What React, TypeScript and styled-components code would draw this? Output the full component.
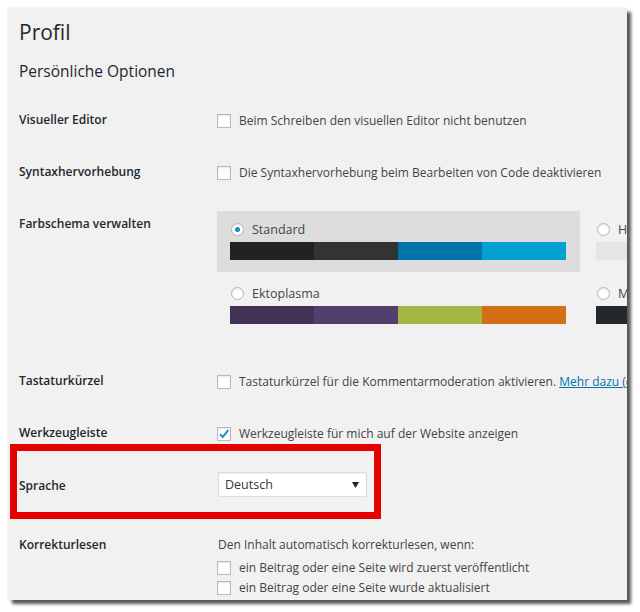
import * as React from 'react';
import styled, { createGlobalStyle } from 'styled-components';

const GlobalStyle = createGlobalStyle`
  html, body {
    margin: 0;
    padding: 0;
    background: #ffffff;
  }
  body {
    font-family: 'Open Sans', 'Noto Sans', sans-serif;
  }
`;

const Page = styled.div`
  width: 640px;
  height: 612px;
  padding: 8px 0 0 8px;
  box-sizing: border-box;
`;

const Panel = styled.div`
  width: 619px;
  height: 592px;
  box-sizing: border-box;
  padding-left: 11px;
  background: #f1f1f1;
  box-shadow: 4px 4px 3px rgba(0, 0, 0, 0.65), 0 0 2px rgba(0, 0, 0, 0.12);
  overflow: hidden;
  color: #444;
  font-size: 12px;
`;

const Title = styled.h1`
  margin: 10px 0 0;
  font-size: 21px;
  line-height: 28px;
  font-weight: 400;
  color: #23282d;
`;

const Subtitle = styled.h2`
  margin: 15px 0 13px;
  font-size: 15.5px;
  line-height: 20px;
  font-weight: 400;
  color: #23282d;
`;

const Row = styled.div<{ $height?: number }>`
  position: relative;
  display: grid;
  grid-template-columns: 198px 1fr;
  min-height: ${(p) => p.$height ?? 52}px;
  box-sizing: border-box;
`;

const Label = styled.div<{ $top?: number }>`
  padding-top: ${(p) => p.$top ?? 17}px;
  font-size: 12px;
  line-height: 18px;
  font-weight: 600;
  color: #23282d;
  white-space: nowrap;
`;

const Field = styled.div<{ $top?: number }>`
  padding-top: ${(p) => p.$top ?? 17}px;
  min-width: 0;
`;

const Choice = styled.label<{ $gap?: number }>`
  display: flex;
  align-items: center;
  gap: 8px;
  height: 20px;
  line-height: 20px;
  white-space: nowrap;
  margin-top: ${(p) => p.$gap ?? 0}px;
`;

const Box = styled.span`
  flex: none;
  width: 14px;
  height: 14px;
  box-sizing: border-box;
  border: 1px solid #b4b9be;
  background: #fff;
  box-shadow: inset 0 1px 2px rgba(0, 0, 0, 0.1);
  display: flex;
  align-items: center;
  justify-content: center;
`;

const Link = styled.a`
  color: #0073aa;
  text-decoration: underline;
`;

const Plain = styled.div`
  line-height: 18px;
  margin-left: 1px;
  white-space: nowrap;
`;

const Schemes = styled.div`
  display: grid;
  grid-template-columns: 363px 363px;
  column-gap: 3px;
  row-gap: 3px;
  padding: 13px 0 19px;
`;

const Scheme = styled.div<{ $active?: boolean }>`
  padding: 10px 13px 12px;
  background: ${(p) => (p.$active ? '#dddddd' : 'transparent')};
`;

const SchemeHead = styled.div`
  display: flex;
  align-items: center;
  gap: 8px;
  height: 16px;
  padding-left: 1px;
  font-size: 12.5px;
  color: #444;
  white-space: nowrap;
`;

const Radio = styled.span<{ $on?: boolean }>`
  flex: none;
  width: 13px;
  height: 13px;
  box-sizing: border-box;
  border-radius: 50%;
  border: 1px solid #b4b9be;
  background: #fff;
  box-shadow: inset 0 1px 2px rgba(0, 0, 0, 0.1);
  display: flex;
  align-items: center;
  justify-content: center;
  &::after {
    content: '';
    display: ${(p) => (p.$on ? 'block' : 'none')};
    width: 5px;
    height: 5px;
    border-radius: 50%;
    background: #1e8cbe;
  }
`;

const Bars = styled.div`
  display: flex;
  width: 336px;
  height: 18px;
  margin-top: 5px;
`;

const Swatch = styled.span<{ $c: string }>`
  flex: 1;
  background: ${(p) => p.$c};
`;

const Select = styled.div`
  width: 149px;
  height: 25px;
  margin-left: 1px;
  box-sizing: border-box;
  border: 1px solid #dddddd;
  background: #fff;
  box-shadow: inset 0 1px 2px rgba(0, 0, 0, 0.07);
  display: flex;
  align-items: center;
  justify-content: space-between;
  padding: 0 7px 0 6px;
  color: #32373c;
  font-size: 12.5px;
`;

const Highlight = styled.div`
  position: absolute;
  left: -9px;
  top: -15px;
  width: 371px;
  height: 75px;
  box-sizing: border-box;
  border: 7px solid #e60000;
  pointer-events: none;
`;

const schemes = [
  { name: 'Standard', active: true, colors: ['#222222', '#333333', '#0073aa', '#00a0d2'] },
  { name: 'Hell', active: false, colors: ['#e5e5e5', '#999999', '#d64e07', '#04a4cc'] },
  { name: 'Ektoplasma', active: false, colors: ['#413256', '#523f6d', '#a3b745', '#d46f15'] },
  { name: 'Mitternacht', active: false, colors: ['#25282b', '#363b3f', '#69a8bb', '#e14d43'] },
];

const Checkbox = ({ checked }: { checked?: boolean }) => (
  <Box>
    {checked && (
      <svg width="12" height="12" viewBox="0 0 12 12">
        <path d="M2 6.2 L4.8 9 L10.2 2.2" fill="none" stroke="#1e8cbe" strokeWidth="2" />
      </svg>
    )}
  </Box>
);

export default function App() {
  return (
    <Page>
      <GlobalStyle />
      <Panel>
        <Title>Profil</Title>
        <Subtitle>Persönliche Optionen</Subtitle>

        <Row>
          <Label>Visueller Editor</Label>
          <Field>
            <Choice>
              <Checkbox />
              Beim Schreiben den visuellen Editor nicht benutzen
            </Choice>
          </Field>
        </Row>

        <Row>
          <Label>Syntaxhervorhebung</Label>
          <Field>
            <Choice>
              <Checkbox />
              Die Syntaxhervorhebung beim Bearbeiten von Code deaktivieren
            </Choice>
          </Field>
        </Row>

        <Row>
          <Label>Farbschema verwalten</Label>
          <Field $top={0}>
            <Schemes>
              {schemes.map((s) => (
                <Scheme key={s.name} $active={s.active}>
                  <SchemeHead>
                    <Radio $on={s.active} />
                    {s.name}
                  </SchemeHead>
                  <Bars>
                    {s.colors.map((c) => (
                      <Swatch key={c} $c={c} />
                    ))}
                  </Bars>
                </Scheme>
              ))}
            </Schemes>
          </Field>
        </Row>

        <Row>
          <Label>Tastaturkürzel</Label>
          <Field>
            <Choice>
              <Checkbox />
              <span>
                Tastaturkürzel für die Kommentarmoderation aktivieren. <Link>Mehr dazu (englisch)</Link>
              </span>
            </Choice>
          </Field>
        </Row>

        <Row>
          <Label>Werkzeugleiste</Label>
          <Field>
            <Choice>
              <Checkbox checked />
              Werkzeugleiste für mich auf der Website anzeigen
            </Choice>
          </Field>
        </Row>

        <Row $height={60}>
          <Label $top={18}>Sprache</Label>
          <Field $top={13}>
            <Select>
              <span>Deutsch</span>
              <svg width="7" height="6" viewBox="0 0 7 6">
                <path d="M0 0 H7 L3.5 6 Z" fill="#222" />
              </svg>
            </Select>
          </Field>
          <Highlight />
        </Row>

        <Row>
          <Label $top={17}>Korrekturlesen</Label>
          <Field $top={17}>
            <Plain>Den Inhalt automatisch korrekturlesen, wenn:</Plain>
            <Choice $gap={4}>
              <Checkbox />
              ein Beitrag oder eine Seite wird zuerst veröffentlicht
            </Choice>
            <Choice>
              <Checkbox />
              ein Beitrag oder eine Seite wurde aktualisiert
            </Choice>
          </Field>
        </Row>
      </Panel>
    </Page>
  );
}
